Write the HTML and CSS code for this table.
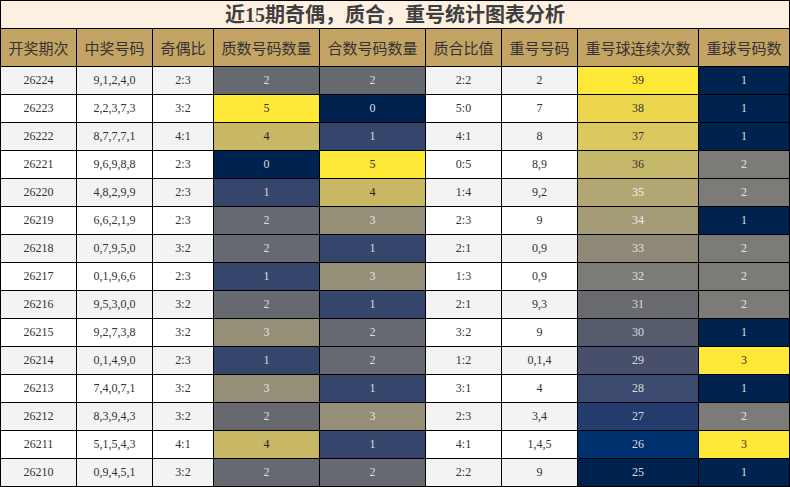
FILE: index.html
```html
<!DOCTYPE html>
<html lang="zh">
<head>
<meta charset="utf-8">
<title>近15期奇偶，质合，重号统计图表分析</title>
<link rel="stylesheet" href="styles.css">
</head>
<body>
<table class="stats">
  <colgroup>
    <col class="w76"><col class="w76"><col class="w61"><col class="w106"><col class="w106"><col class="w76"><col class="w76"><col class="w121"><col class="w91">
  </colgroup>
  <thead>
    <tr class="title-row"><th colspan="9" class="title">近15期奇偶，质合，重号统计图表分析</th></tr>
    <tr class="head-row">
      <th>开奖期次</th><th>中奖号码</th><th>奇偶比</th><th>质数号码数量</th><th>合数号码数量</th><th>质合比值</th><th>重号号码</th><th>重号球连续次数</th><th>重球号码数</th>
    </tr>
  </thead>
  <tbody>
    <tr class="alt"><td>26224</td><td>9,1,2,4,0</td><td>2:3</td><td class="q2">2</td><td class="q2">2</td><td>2:2</td><td>2</td><td class="g39">39</td><td class="r1">1</td></tr>
    <tr><td>26223</td><td>2,2,3,7,3</td><td>3:2</td><td class="q5">5</td><td class="q0">0</td><td>5:0</td><td>7</td><td class="g38">38</td><td class="r1">1</td></tr>
    <tr class="alt"><td>26222</td><td>8,7,7,7,1</td><td>4:1</td><td class="q4">4</td><td class="q1">1</td><td>4:1</td><td>8</td><td class="g37">37</td><td class="r1">1</td></tr>
    <tr><td>26221</td><td>9,6,9,8,8</td><td>2:3</td><td class="q0">0</td><td class="q5">5</td><td>0:5</td><td>8,9</td><td class="g36">36</td><td class="r2">2</td></tr>
    <tr class="alt"><td>26220</td><td>4,8,2,9,9</td><td>2:3</td><td class="q1">1</td><td class="q4">4</td><td>1:4</td><td>9,2</td><td class="g35">35</td><td class="r2">2</td></tr>
    <tr><td>26219</td><td>6,6,2,1,9</td><td>2:3</td><td class="q2">2</td><td class="q3">3</td><td>2:3</td><td>9</td><td class="g34">34</td><td class="r1">1</td></tr>
    <tr class="alt"><td>26218</td><td>0,7,9,5,0</td><td>3:2</td><td class="q2">2</td><td class="q1">1</td><td>2:1</td><td>0,9</td><td class="g33">33</td><td class="r2">2</td></tr>
    <tr><td>26217</td><td>0,1,9,6,6</td><td>2:3</td><td class="q1">1</td><td class="q3">3</td><td>1:3</td><td>0,9</td><td class="g32">32</td><td class="r2">2</td></tr>
    <tr class="alt"><td>26216</td><td>9,5,3,0,0</td><td>3:2</td><td class="q2">2</td><td class="q1">1</td><td>2:1</td><td>9,3</td><td class="g31">31</td><td class="r2">2</td></tr>
    <tr><td>26215</td><td>9,2,7,3,8</td><td>3:2</td><td class="q3">3</td><td class="q2">2</td><td>3:2</td><td>9</td><td class="g30">30</td><td class="r1">1</td></tr>
    <tr class="alt"><td>26214</td><td>0,1,4,9,0</td><td>2:3</td><td class="q1">1</td><td class="q2">2</td><td>1:2</td><td>0,1,4</td><td class="g29">29</td><td class="r3">3</td></tr>
    <tr><td>26213</td><td>7,4,0,7,1</td><td>3:2</td><td class="q3">3</td><td class="q1">1</td><td>3:1</td><td>4</td><td class="g28">28</td><td class="r1">1</td></tr>
    <tr class="alt"><td>26212</td><td>8,3,9,4,3</td><td>3:2</td><td class="q2">2</td><td class="q3">3</td><td>2:3</td><td>3,4</td><td class="g27">27</td><td class="r2">2</td></tr>
    <tr><td>26211</td><td>5,1,5,4,3</td><td>4:1</td><td class="q4">4</td><td class="q1">1</td><td>4:1</td><td>1,4,5</td><td class="g26">26</td><td class="r3">3</td></tr>
    <tr class="alt"><td>26210</td><td>0,9,4,5,1</td><td>3:2</td><td class="q2">2</td><td class="q2">2</td><td>2:2</td><td>9</td><td class="g25">25</td><td class="r1">1</td></tr>
  </tbody>
</table>
</body>
</html>
```
FILE: styles.css
```css
html, body {
  margin: 0;
  padding: 0;
  background: #ffffff;
}

.stats {
  border-collapse: collapse;
  table-layout: fixed;
  width: 790px;
  font-family: "Liberation Serif", "Noto Sans CJK SC", serif;
  color: #333333;
}

.w76 { width: 76px; }
.w61 { width: 61px; }
.w106 { width: 106px; }
.w121 { width: 121px; }
.w91 { width: 91px; }

.stats th,
.stats td {
  border: 1px solid #000000;
  padding: 0;
  text-align: center;
  vertical-align: middle;
  overflow: hidden;
  white-space: nowrap;
}

.title-row { height: 28px; }
.title {
  background: #fdf0e1;
  font-family: "Liberation Serif", "Noto Sans CJK SC", serif;
  font-weight: 700;
  font-size: 20px;
  color: #3f3f3f;
  line-height: 26px;
}

.head-row { height: 38px; }
.head-row th {
  background: #c4a464;
  font-family: "Noto Sans CJK SC", sans-serif;
  font-weight: 400;
  font-size: 15px;
  color: #333333;
}

.stats tbody tr { height: 28px; }
.stats td {
  font-size: 12px;
  background: #ffffff;
}
.alt td { background: #f3f3f3; }

/* 0-5 count scale */
.stats td.q0 { background: #00224e; color: #dcdcdc; }
.stats td.q1 { background: #35456c; color: #dcdcdc; }
.stats td.q2 { background: #666970; color: #dcdcdc; }
.stats td.q3 { background: #958f78; color: #e4e4e4; }
.stats td.q4 { background: #c8b866; color: #222222; }
.stats td.q5 { background: #fee838; color: #333333; }

/* repeat streak gradient */
.stats td.g25 { background: #00224e; color: #dcdcdc; }
.stats td.g26 { background: #00316f; color: #dcdcdc; }
.stats td.g27 { background: #233b6d; color: #dcdcdc; }
.stats td.g28 { background: #3b4a6e; color: #dcdcdc; }
.stats td.g29 { background: #474f6b; color: #dcdcdc; }
.stats td.g30 { background: #575c6d; color: #dcdcdc; }
.stats td.g31 { background: #696a70; color: #dcdcdc; }
.stats td.g32 { background: #7b7b78; color: #e0e0e0; }
.stats td.g33 { background: #8e8876; color: #e4e4e4; }
.stats td.g34 { background: #a29b76; color: #eeeeee; }
.stats td.g35 { background: #b2a772; color: #f0f0f0; }
.stats td.g36 { background: #c6b86a; color: #333333; }
.stats td.g37 { background: #dbc85f; color: #333333; }
.stats td.g38 { background: #ecd64e; color: #333333; }
.stats td.g39 { background: #fee838; color: #333333; }

/* repeat ball count */
.stats td.r1 { background: #00224e; color: #dcdcdc; }
.stats td.r2 { background: #7c7b78; color: #e4e4e4; }
.stats td.r3 { background: #fee838; color: #333333; }
```
